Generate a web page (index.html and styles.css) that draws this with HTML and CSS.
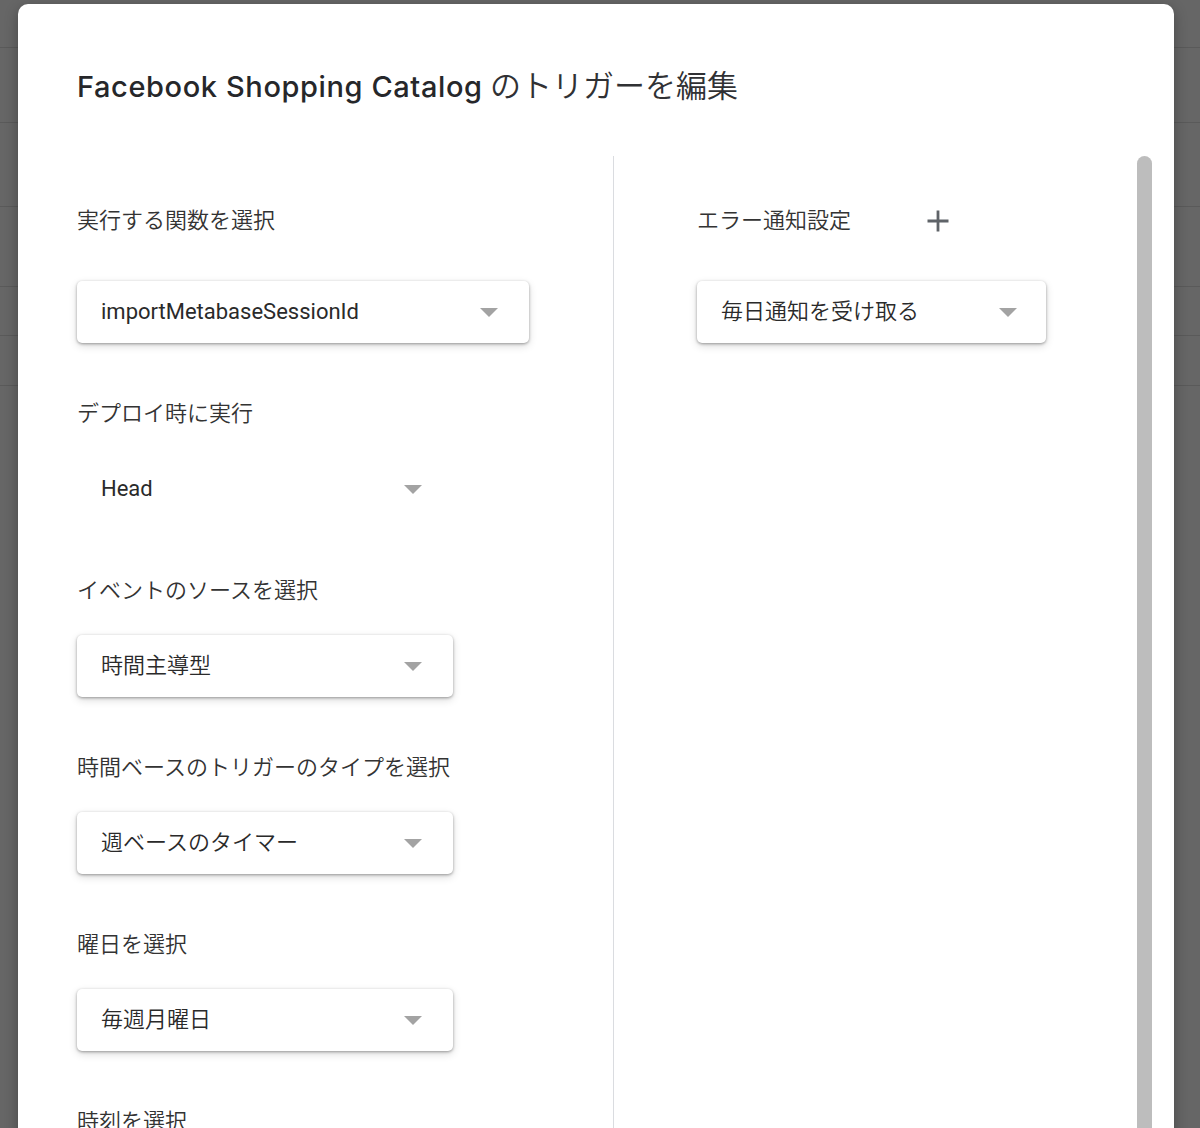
FILE: index.html
```html
<!DOCTYPE html>
<html lang="ja">
<head>
<meta charset="utf-8">
<title>トリガーを編集</title>
<link rel="stylesheet" href="styles.css">
</head>
<body>
  <div class="backdrop">
    <div class="bg-row r1"></div>
    <div class="bg-row r2"></div>
    <div class="bg-row r3"></div>
    <div class="bg-row r4"></div>
    <div class="bg-row r5"></div>
    <div class="bg-row r6"></div>
  </div>

  <div class="dialog">
    <h1 class="title"><span class="title-latin">Facebook Shopping Catalog</span> <span class="title-ja">のトリガーを編集</span></h1>

    <div class="dialog-body">
      <div class="col col-left">
        <div class="field first">
          <div class="label">実行する関数を選択</div>
          <div class="select raised w-wide">
            <span class="value latin">importMetabaseSessionId</span>
            <svg class="arrow" width="18" height="9" viewBox="0 0 18 9"><polygon points="0,0 18,0 9,9"/></svg>
          </div>
        </div>

        <div class="field">
          <div class="label">デプロイ時に実行</div>
          <div class="select flat w-std">
            <span class="value latin">Head</span>
            <svg class="arrow" width="18" height="9" viewBox="0 0 18 9"><polygon points="0,0 18,0 9,9"/></svg>
          </div>
        </div>

        <div class="field">
          <div class="label">イベントのソースを選択</div>
          <div class="select raised w-std">
            <span class="value">時間主導型</span>
            <svg class="arrow" width="18" height="9" viewBox="0 0 18 9"><polygon points="0,0 18,0 9,9"/></svg>
          </div>
        </div>

        <div class="field">
          <div class="label">時間ベースのトリガーのタイプを選択</div>
          <div class="select raised w-std">
            <span class="value">週ベースのタイマー</span>
            <svg class="arrow" width="18" height="9" viewBox="0 0 18 9"><polygon points="0,0 18,0 9,9"/></svg>
          </div>
        </div>

        <div class="field">
          <div class="label">曜日を選択</div>
          <div class="select raised w-std">
            <span class="value">毎週月曜日</span>
            <svg class="arrow" width="18" height="9" viewBox="0 0 18 9"><polygon points="0,0 18,0 9,9"/></svg>
          </div>
        </div>

        <div class="field">
          <div class="label">時刻を選択</div>
        </div>
      </div>

      <div class="col col-right">
        <div class="field first">
          <div class="label-row">
            <div class="label">エラー通知設定</div>
            <svg class="plus" width="22" height="22" viewBox="0 0 22 22"><path d="M11 0.5v21M0.5 11h21"/></svg>
          </div>
          <div class="select raised w-narrow">
            <span class="value">毎日通知を受け取る</span>
            <svg class="arrow" width="18" height="9" viewBox="0 0 18 9"><polygon points="0,0 18,0 9,9"/></svg>
          </div>
        </div>
      </div>

      <div class="scrollbar"></div>
    </div>
  </div>
</body>
</html>
```

FILE: styles.css
```css
html, body {
  margin: 0;
  padding: 0;
  height: 100%;
  overflow: hidden;
}

body {
  background: #666666;
  font-family: "Roboto", "Noto Sans CJK JP", sans-serif;
  color: #333333;
  position: relative;
}

.backdrop {
  display: flex;
  flex-direction: column;
}

.bg-row {
  border-bottom: 1px solid #5a5a5a;
}
.r1 { height: 47px; }
.r2 { height: 74px; }
.r3 { height: 83px; }
.r4 { height: 79px; }
.r5 { height: 48px; }
.r6 { height: 49px; }

.dialog {
  position: absolute;
  left: 18px;
  top: 4px;
  width: 1156px;
  height: 1200px;
  background: #ffffff;
  border-radius: 10px;
  box-shadow: 0 4px 14px rgba(0, 0, 0, 0.3);
  display: flex;
  flex-direction: column;
  overflow: hidden;
}

.title {
  margin: 0;
  padding: 60px 0 52px 59px;
  height: 40px;
  line-height: 40px;
  font-weight: 400;
  font-size: 30px;
  color: #202124;
  white-space: nowrap;
}

.title-latin {
  font-family: "Inter", "Noto Sans CJK JP", sans-serif;
  font-weight: 500;
  font-size: 29px;
  letter-spacing: 0.6px;
  color: #26272a;
}

.title-ja {
  font-family: "Noto Sans CJK JP", sans-serif;
  font-weight: 350;
  font-size: 31px;
  color: #303134;
}

.dialog-body {
  flex: 1;
  display: flex;
}

.col {
  display: flex;
  flex-direction: column;
}

.col-left {
  width: 536px;
  padding: 50px 0 0 59px;
  border-right: 1px solid #dadce0;
}

.col-right {
  flex: 1;
  padding: 50px 0 0 83px;
}

.field {
  display: flex;
  flex-direction: column;
  align-items: flex-start;
}

.label {
  font-size: 22px;
  line-height: 30px;
  height: 30px;
  font-weight: 350;
  color: #333333;
  white-space: nowrap;
}

.field .label {
  margin-bottom: 29px;
}

.field.first .label {
  margin-bottom: 45px;
}

.label-row {
  display: flex;
  align-items: center;
}

.label-row .label {
  margin-bottom: 45px;
}

.plus {
  margin-left: 76px;
  margin-bottom: 45px;
  stroke: #5f6368;
  stroke-width: 2.8;
  fill: none;
}

.select {
  box-sizing: border-box;
  height: 62px;
  display: flex;
  align-items: center;
  justify-content: space-between;
  padding: 0 31px 0 24px;
  border-radius: 5px;
  background: #ffffff;
  margin-bottom: 56px;
}

.select.raised {
  box-shadow: 0 1px 3px rgba(0, 0, 0, 0.35), 0 3px 8px rgba(0, 0, 0, 0.14);
}

.w-wide { width: 452px; }
.w-std { width: 376px; }
.w-narrow { width: 349px; padding-right: 29px; }

.value {
  font-size: 22px;
  line-height: 30px;
  font-weight: 350;
  color: #2a2a2a;
  white-space: nowrap;
}

.value.latin {
  font-weight: 400;
}

.arrow {
  fill: #a3a3a3;
  flex: none;
}

.scrollbar {
  width: 15px;
  margin-right: 22px;
  background: #bdbdbd;
  border-radius: 8px 8px 0 0;
}
```
